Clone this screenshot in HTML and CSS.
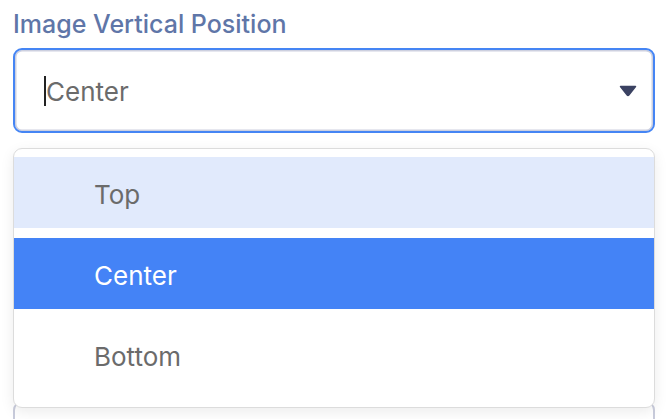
FILE: index.html
```html
<!DOCTYPE html>
<html>
<head>
<meta charset="utf-8">
<link rel="stylesheet" href="styles.css">
</head>
<body>
<div class="field">
  <div class="label">Image Vertical Position</div>
  <div class="select-wrap">
    <div class="select">
      <span class="caret"></span><span class="value">Center</span>
      <svg class="arrow" width="18" height="12" viewBox="0 0 18 12"><path d="M1.5 1.5 H16.5 L9.8 10 Q9 11 8.2 10 Z" fill="#3b4262" stroke="#3b4262" stroke-width="1.5" stroke-linejoin="round"/></svg>
    </div>
    <div class="menu">
      <div class="option hover">Top</div>
      <div class="option selected">Center</div>
      <div class="option">Bottom</div>
    </div>
  </div>
  <div class="next-box"></div>
</div>
</body>
</html>
```
FILE: styles.css
```css
html, body {
  margin: 0;
  padding: 0;
  background: #ffffff;
  font-family: Inter, "Liberation Sans", sans-serif;
}
.field {
  padding: 8px 11px 0 13px;
}
.label {
  font-size: 25px;
  font-weight: 500;
  color: #5f76a8;
  line-height: 32px;
  padding-left: 0;
  margin-bottom: 8px;
}
.select-wrap {
  position: relative;
}
.select {
  height: 85px;
  box-sizing: border-box;
  border: 2px solid #4585f4;
  border-radius: 9px;
  box-shadow: inset 0 0 0 1.5px #cdd0df;
  display: flex;
  align-items: center;
  padding-left: 29px;
  padding-right: 16px;
}
.caret {
  width: 2px;
  height: 30px;
  background: #222;
  margin-right: 0;
}
.value {
  font-size: 26px;
  color: #6b6b6b;
  flex: 1;
  padding-top: 2px;
}
.arrow {
  display: block;
}
.menu {
  position: absolute;
  left: 0;
  right: 0;
  top: 100px;
  background: #fff;
  border: 1.5px solid #dcdcdc;
  border-radius: 9px;
  box-shadow: 0 4px 14px rgba(0,0,0,0.08);
  padding: 8px 0 17px;
  z-index: 2;
}
.option {
  height: 71px;
  box-sizing: border-box;
  display: flex;
  align-items: center;
  padding-left: 80px;
  padding-top: 4px;
  font-size: 26px;
  color: #6b6b6b;
}
.option + .option {
  margin-top: 10px;
}
.option.hover {
  background: #e1eafc;
}
.option.selected {
  background: #4483f6;
  color: #ffffff;
}
.next-box {
  margin-top: 268px;
  height: 16px;
  border: 2px solid #c9ccdc;
  border-bottom: none;
  border-radius: 9px 9px 0 0;
}
```
